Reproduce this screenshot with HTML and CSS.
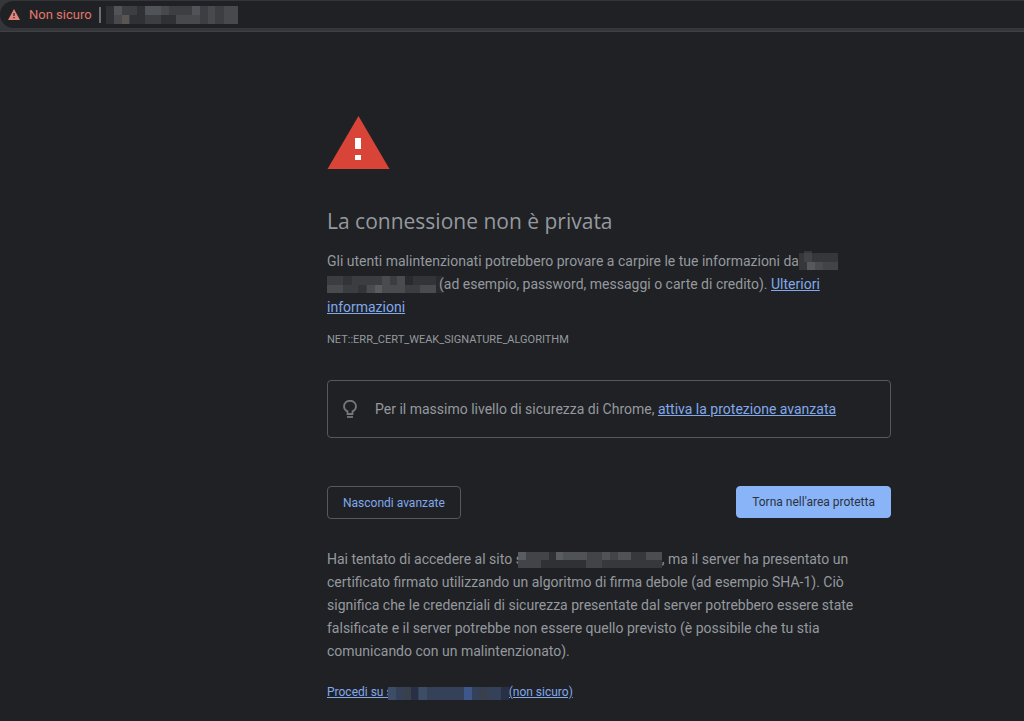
FILE: index.html
```html
<!DOCTYPE html>
<html lang="it">
<head>
<meta charset="utf-8">
<meta name="viewport" content="width=device-width, initial-scale=1">
<title>Errore relativo alla privacy</title>
<link rel="stylesheet" href="styles.css">
</head>
<body>
<header class="toolbar">
  <div class="omnibox">
    <svg class="omnibox-icon" width="12" height="11" viewBox="0 0 12 11" aria-hidden="true"><path fill="#e0857c" d="M6 0 12 11H0z"/><path fill="#202124" d="M5.400 4h1.200v3H5.400zM5.400 8h1.200v1.200H5.400z"/></svg>
    <span class="omnibox-status">Non sicuro</span>
    <span class="omnibox-divider"></span>
    <svg class="mosaic" width="132" height="18" viewBox="0 0 132 18" shape-rendering="crispEdges" aria-hidden="true"><path fill="#3c3e41" d="M0 0h132v18H0z"/><path fill="#303134" d="M0 0h8v18H0zM31 0h8v9h-8zM24 9h15v9H24zM55 9h15v9H55z"/><path fill="#505357" d="M8 0h8v9H8zM39 0h16v9H39zM86 0h8v9h-8z"/><path fill="#5a5551" d="M16 9h7v9h-7z"/><path fill="#47494c" d="M8 9h8v9H8zM70 9h24v9H70zM102 0h7v18h-7zM118 0h14v18h-14zM55 0h8v9h-8z"/></svg>
  </div>
</header>
<main class="interstitial">
  <svg class="warning" width="63" height="53" viewBox="0 0 63 53" role="img" aria-label="Avviso"><path fill="#d84438" d="M31.500 0 62.500 53H.5z"/><path fill="#fff" d="M28 22h6v11h-6zM28 39h6v5h-6z"/></svg>
  <h1 class="title">La connessione non è privata</h1>
  <p class="text">Gli utenti malintenzionati potrebbero provare a carpire le tue informazioni da<svg class="mosaic" width="39" height="19" viewBox="0 0 39 19" shape-rendering="crispEdges" aria-hidden="true"><path fill="#35373a" d="M0 2h5V0h8v2h26v17H0z"/><path fill="#414346" d="M5 2h8v9H5zM24 11h15v8H24z"/><path fill="#56585a" d="M8 11h8v8H8z"/><path fill="#494b4e" d="M16 11h8v8h-8z"/></svg><br>
  <svg class="mosaic mosaic-lead" width="116" height="17" viewBox="0 0 116 17" shape-rendering="crispEdges" aria-hidden="true"><path fill="#3b3d40" d="M0 0h109v17H0z"/><path fill="#292a2d" d="M109 0h7v17h-7zM78 0h8v9h-8z"/><path fill="#494b4e" d="M0 9h16v8H0zM55 0h8v9h-8zM70 0h8v9h-8zM40 9h8v8h-8zM54 9h24v8H54zM93 9h16v8H93z"/><path fill="#595b5e" d="M48 9h7v8h-7z"/><path fill="#323437" d="M16 0h9v9h-9zM31 9h8v8h-8zM86 0h23v9H86z"/></svg>(ad esempio, password, messaggi o carte di credito). <a href="#">Ulteriori<br>informazioni</a></p>
  <p class="error-code">NET::ERR_CERT_WEAK_SIGNATURE_ALGORITHM</p>
  <section class="promo">
    <svg class="bulb" width="14" height="19" viewBox="0 0 14 19" fill="none" stroke="#74777b" aria-hidden="true"><path stroke-width="1.8" d="M4.500 14v-2.600C2.400 10.400 1 8.700 1 6.500a6 5.700 0 0 1 12 0c0 2.200-1.400 3.900-3.500 4.900V14z"/><path stroke-width="1.800" d="M4 17h6"/></svg>
    <p class="promo-text">Per il massimo livello di sicurezza di Chrome, <a href="#">attiva la protezione avanzata</a></p>
  </section>
  <div class="actions">
    <button class="button" type="button">Nascondi avanzate</button>
    <button class="button button-primary" type="button">Torna nell'area protetta</button>
  </div>
  <p class="text">Hai tentato di accedere al sito s<svg class="mosaic mosaic-over" width="144" height="16" viewBox="0 0 144 16" shape-rendering="crispEdges" aria-hidden="true"><path fill="#424447" d="M0 0h144v16H0z"/><path fill="#5a5d60" d="M0 0h8v8H0zM38 0h7v8h-7z"/><path fill="#505356" d="M45 0h24v8H45zM84 0h8v8h-8zM100 0h13v8h-13z"/><path fill="#303134" d="M23 8h45v8H23zM31 0h7v8h-7z"/><path fill="#36383b" d="M113 0h15v8h-15zM84 8h60v8H84z"/><path fill="#4b4e51" d="M128 0h16v8h-16z"/></svg>, ma il server ha presentato un<br>
  certificato firmato utilizzando un algoritmo di firma debole (ad esempio SHA-1). Ciò<br>
  significa che le credenziali di sicurezza presentate dal server potrebbero essere state<br>
  falsificate e il server potrebbe non essere quello previsto (è possibile che tu stia<br>
  comunicando con un malintenzionato).</p>
  <p class="proceed"><a href="#">Procedi su s<svg class="mosaic mosaic-over" width="121" height="13" viewBox="0 0 121 13" shape-rendering="crispEdges" aria-hidden="true"><path fill="#354158" d="M0 0h121v13H0z"/><path fill="#3e4d66" d="M0 0h8v13H0zM31 0h8v13h-8z"/><path fill="#293043" d="M23 0h7v13h-7zM113 0h8v13h-8z"/><path fill="#3d578b" d="M76 0h8v13h-8z"/><path fill="#39404d" d="M15 0h8v13h-8zM91 0h8v13h-8z"/></svg>(non sicuro)</a></p>
</main>
</body>
</html>
```
FILE: styles.css
```css
* {
  box-sizing: border-box;
}

body {
  margin: 0;
  background: #202124;
  color: #94999f;
  font-family: "Segoe UI", Roboto, "Open Sans", sans-serif;
}

h1,
p {
  margin: 0;
  font-weight: 400;
}

a {
  color: #80a9ec;
}

.toolbar {
  height: 32px;
  padding-top: 1px;
  background: #35363a;
  border-bottom: 1px solid #3f4044;
}

.omnibox {
  display: flex;
  align-items: center;
  height: 27px;
  padding-left: 8px;
  background: #202124;
  border-radius: 14px 0 0 14px;
}

.omnibox-status {
  margin-left: 9px;
  color: #e0786c;
  font-size: 13px;
}

.omnibox-divider {
  width: 2px;
  height: 16px;
  margin: 0 5px 0 7px;
  background: #6b6e72;
}

.mosaic {
  vertical-align: -4px;
}

.mosaic-lead {
  margin-right: -4px;
}

.mosaic-over {
  position: relative;
  margin-left: -5px;
  vertical-align: -4px;
}

.interstitial {
  width: 564px;
  max-width: calc(100% - 327px);
  margin-left: 327px;
  padding-top: 84px;
}

.warning {
  display: block;
}

.title {
  margin-top: 36px;
  font-family: "Segoe UI", "Open Sans", sans-serif;
  font-size: 21px;
  line-height: 32px;
}

.text {
  margin-top: 13px;
  font-size: 14px;
  line-height: 23px;
  white-space: nowrap;
}

.error-code {
  margin-top: 12px;
  font-size: 11px;
  line-height: 18px;
}

.promo {
  display: flex;
  align-items: center;
  gap: 18px;
  margin-top: 31px;
  padding: 16px 15px;
  border: 1px solid #55585c;
  border-radius: 4px;
}

.promo-text {
  font-size: 14px;
  line-height: 24px;
}

.actions {
  display: flex;
  justify-content: space-between;
  align-items: flex-start;
  margin: 48px 0 29px;
}

.button {
  height: 33px;
  padding: 0 15px;
  border: 1px solid #55585c;
  border-radius: 4px;
  background: transparent;
  color: #80a9ec;
  font: inherit;
  font-size: 12px;
}

.button-primary {
  height: 32px;
  border-color: #8ab4f8;
  background: #8ab4f8;
  color: #2b3240;
}

.proceed {
  margin-top: 19px;
  font-size: 12px;
  line-height: 20px;
}
```
